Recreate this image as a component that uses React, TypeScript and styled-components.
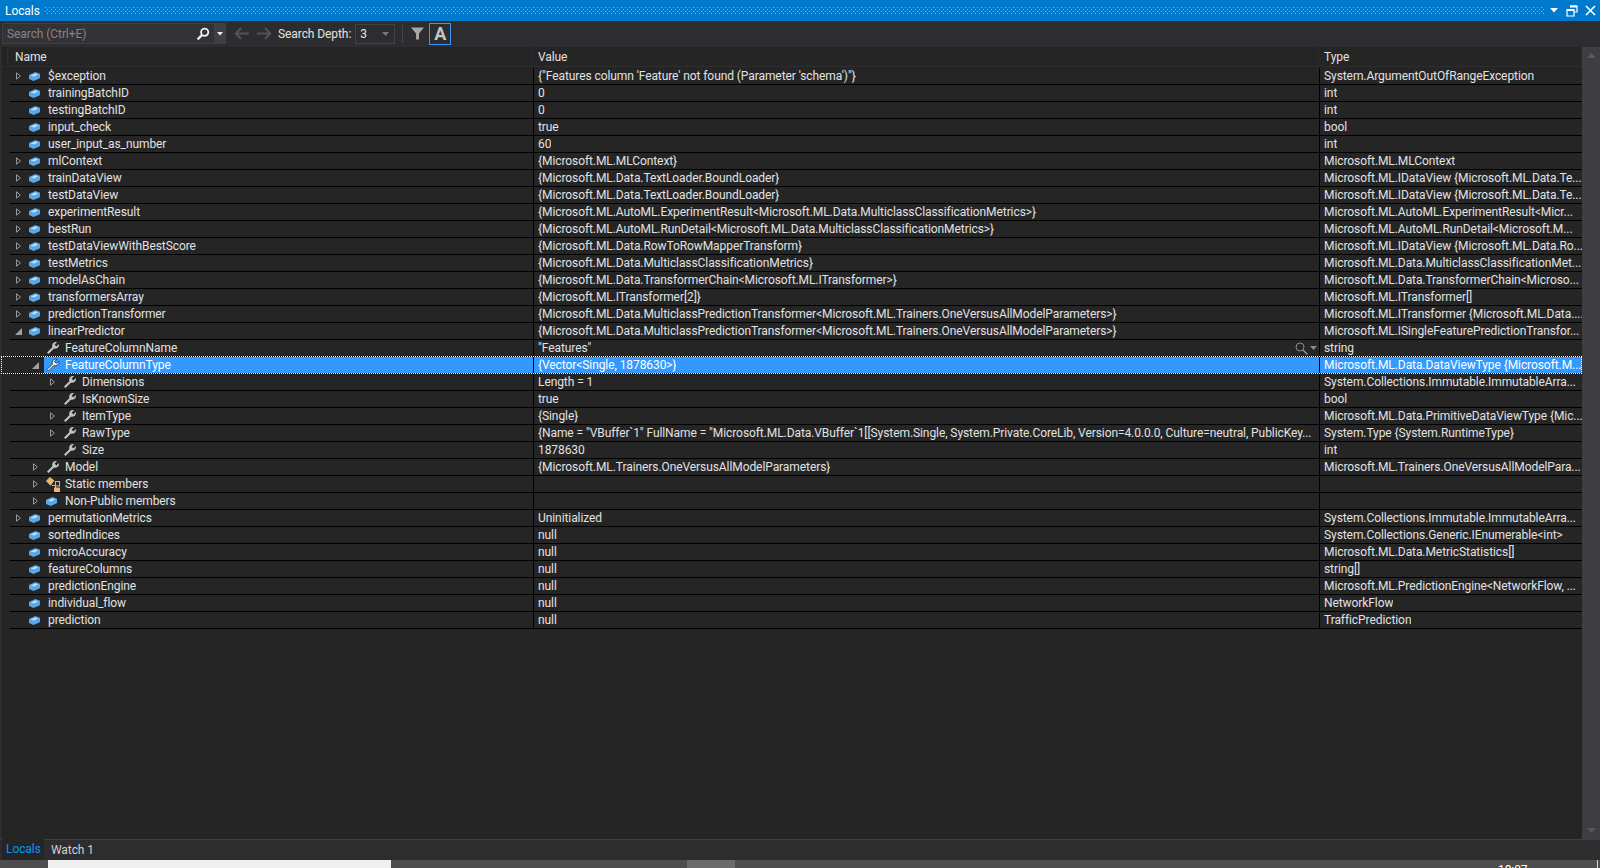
import React from "react";
import styled, { createGlobalStyle } from "styled-components";

type Arrow = "none" | "closed" | "open";
type IconKind = "cube" | "wrench" | "static";

interface Local {
  name: string;
  value: string;
  type: string;
  level?: number;
  arrow?: Arrow;
  icon?: IconKind;
  selected?: boolean;
  visualizer?: boolean;
}

const TRANSFORMER =
  "{Microsoft.ML.Data.MulticlassPredictionTransformer<Microsoft.ML.Trainers.OneVersusAllModelParameters>}";
const LOADER = "{Microsoft.ML.Data.TextLoader.BoundLoader}";

const locals: Local[] = [
  { name: "$exception", value: `{"Features column 'Feature' not found (Parameter 'schema')"}`, type: "System.ArgumentOutOfRangeException", arrow: "closed" },
  { name: "trainingBatchID", value: "0", type: "int" },
  { name: "testingBatchID", value: "0", type: "int" },
  { name: "input_check", value: "true", type: "bool" },
  { name: "user_input_as_number", value: "60", type: "int" },
  { name: "mlContext", value: "{Microsoft.ML.MLContext}", type: "Microsoft.ML.MLContext", arrow: "closed" },
  { name: "trainDataView", value: LOADER, type: "Microsoft.ML.IDataView {Microsoft.ML.Data.Te...", arrow: "closed" },
  { name: "testDataView", value: LOADER, type: "Microsoft.ML.IDataView {Microsoft.ML.Data.Te...", arrow: "closed" },
  { name: "experimentResult", value: "{Microsoft.ML.AutoML.ExperimentResult<Microsoft.ML.Data.MulticlassClassificationMetrics>}", type: "Microsoft.ML.AutoML.ExperimentResult<Micr...", arrow: "closed" },
  { name: "bestRun", value: "{Microsoft.ML.AutoML.RunDetail<Microsoft.ML.Data.MulticlassClassificationMetrics>}", type: "Microsoft.ML.AutoML.RunDetail<Microsoft.M...", arrow: "closed" },
  { name: "testDataViewWithBestScore", value: "{Microsoft.ML.Data.RowToRowMapperTransform}", type: "Microsoft.ML.IDataView {Microsoft.ML.Data.Ro...", arrow: "closed" },
  { name: "testMetrics", value: "{Microsoft.ML.Data.MulticlassClassificationMetrics}", type: "Microsoft.ML.Data.MulticlassClassificationMet...", arrow: "closed" },
  { name: "modelAsChain", value: "{Microsoft.ML.Data.TransformerChain<Microsoft.ML.ITransformer>}", type: "Microsoft.ML.Data.TransformerChain<Microso...", arrow: "closed" },
  { name: "transformersArray", value: "{Microsoft.ML.ITransformer[2]}", type: "Microsoft.ML.ITransformer[]", arrow: "closed" },
  { name: "predictionTransformer", value: TRANSFORMER, type: "Microsoft.ML.ITransformer {Microsoft.ML.Data....", arrow: "closed" },
  { name: "linearPredictor", value: TRANSFORMER, type: "Microsoft.ML.ISingleFeaturePredictionTransfor...", arrow: "open" },
  { name: "FeatureColumnName", value: `"Features"`, type: "string", level: 1, icon: "wrench", visualizer: true },
  { name: "FeatureColumnType", value: "{Vector<Single, 1878630>}", type: "Microsoft.ML.Data.DataViewType {Microsoft.M...", level: 1, arrow: "open", icon: "wrench", selected: true },
  { name: "Dimensions", value: "Length = 1", type: "System.Collections.Immutable.ImmutableArra...", level: 2, arrow: "closed", icon: "wrench" },
  { name: "IsKnownSize", value: "true", type: "bool", level: 2, icon: "wrench" },
  { name: "ItemType", value: "{Single}", type: "Microsoft.ML.Data.PrimitiveDataViewType {Mic...", level: 2, arrow: "closed", icon: "wrench" },
  { name: "RawType", value: `{Name = "VBuffer\`1" FullName = "Microsoft.ML.Data.VBuffer\`1[[System.Single, System.Private.CoreLib, Version=4.0.0.0, Culture=neutral, PublicKey...`, type: "System.Type {System.RuntimeType}", level: 2, arrow: "closed", icon: "wrench" },
  { name: "Size", value: "1878630", type: "int", level: 2, icon: "wrench" },
  { name: "Model", value: "{Microsoft.ML.Trainers.OneVersusAllModelParameters}", type: "Microsoft.ML.Trainers.OneVersusAllModelPara...", level: 1, arrow: "closed", icon: "wrench" },
  { name: "Static members", value: "", type: "", level: 1, arrow: "closed", icon: "static" },
  { name: "Non-Public members", value: "", type: "", level: 1, arrow: "closed" },
  { name: "permutationMetrics", value: "Uninitialized", type: "System.Collections.Immutable.ImmutableArra...", arrow: "closed" },
  { name: "sortedIndices", value: "null", type: "System.Collections.Generic.IEnumerable<int>" },
  { name: "microAccuracy", value: "null", type: "Microsoft.ML.Data.MetricStatistics[]" },
  { name: "featureColumns", value: "null", type: "string[]" },
  { name: "predictionEngine", value: "null", type: "Microsoft.ML.PredictionEngine<NetworkFlow, ..." },
  { name: "individual_flow", value: "null", type: "NetworkFlow" },
  { name: "prediction", value: "null", type: "TrafficPrediction" },
];

const CubeIcon = () => (
  <svg width="11" height="9" viewBox="0 0 11 9">
    <path
      d="M0 3.5Q0 3 .8 2.6L6 .2Q6.6 0 7 .2L10.4 1.6Q11 1.9 11 2.4V5.5Q11 6 10.4 6.4L5 8.8Q4.4 9 4 8.8L.6 7.2Q0 6.9 0 6.4z"
      fill="#57a9ec"
    />
    <path d="M2 3.4 6.2 1.4 9 2.5 5 4.4z" fill="#c4e2fb" />
  </svg>
);

const WrenchIcon = ({ selected }: { selected?: boolean }) => (
  <svg width="14" height="14" viewBox="0 0 14 14">
    <path
      d="M1 11.5 6.3 6.2C5.8 3.6 7 1 10 1L11 1.2 8.6 3.6 10.4 5.4 12.8 3 13 4C13 7 10.4 8.2 7.8 7.7L2.5 13Z"
      fill={selected ? "#e8e8e8" : "#c2c2c2"}
      stroke={selected ? "#2a2a2a" : "none"}
      strokeWidth="0.8"
    />
  </svg>
);

const StaticIcon = () => (
  <svg width="14" height="15" viewBox="0 0 14 15">
    <path d="M6 8.5h3.5V12" stroke="#e8b778" strokeWidth="1" fill="none" />
    <path d="M0 4 3.8 0 8.4 3.4 4.6 8.8z" fill="#e8b778" />
    <rect x="9.5" y="4.5" width="4" height="4.5" fill="#252526" stroke="#e8b778" />
    <rect x="8" y="10.5" width="6" height="4.5" fill="#e8b778" />
  </svg>
);

const ExpandArrow = ({ state }: { state: Arrow }) => {
  if (state === "closed") {
    return (
      <svg width="5" height="8" viewBox="0 0 5 8">
        <path d="M.5.8 4.4 4 .5 7.2z" fill="none" stroke="#9a9a9a" />
      </svg>
    );
  }
  if (state === "open") {
    return (
      <svg width="7" height="7" viewBox="0 0 7 7">
        <path d="M7 0v7H0z" fill="#a0a0a0" />
      </svg>
    );
  }
  return null;
};

const App: React.FC = () => {
  return (
    <>
      <GlobalStyle />
      <Window>
        <TitleBar>
          <TitleText>Locals</TitleText>
          <Dither />
          <TitleButtons>
            <svg width="10" height="5" viewBox="0 0 10 5">
              <path d="M1 0h8L5 4.6z" fill="#fff" />
            </svg>
            <svg width="12" height="12" viewBox="0 0 12 12">
              <path d="M4 1h7v6H8M1 4.5h7v6.5H1z" fill="none" stroke="#fff" strokeWidth="1.2" />
              <path d="M4 1.5h7M1 5h7" stroke="#fff" strokeWidth="2" />
            </svg>
            <svg width="11" height="11" viewBox="0 0 11 11">
              <path d="M1 1l9 9M10 1l-9 9" stroke="#fff" strokeWidth="1.6" />
            </svg>
          </TitleButtons>
        </TitleBar>

        <Toolbar>
          <SearchBox>
            <SearchHint>Search (Ctrl+E)</SearchHint>
            <svg width="14" height="14" viewBox="0 0 14 14">
              <circle cx="8.7" cy="5.2" r="3.6" fill="none" stroke="#f0f0f0" strokeWidth="1.8" />
              <path d="M6 8 1.6 12.4" stroke="#f0f0f0" strokeWidth="2.4" />
            </svg>
            <SearchDrop>
              <svg width="6" height="4" viewBox="0 0 6 4">
                <path d="M0 0h6L3 3.4z" fill="#f0f0f0" />
              </svg>
            </SearchDrop>
          </SearchBox>
          <NavArrows>
            <svg width="16" height="13" viewBox="0 0 16 13">
              <path d="M7 1 1.8 6.5 7 12M2 6.5h13" fill="none" stroke="#555557" strokeWidth="2" />
            </svg>
            <svg width="16" height="13" viewBox="0 0 16 13">
              <path d="M9 1l5.2 5.5L9 12M14 6.5H1" fill="none" stroke="#555557" strokeWidth="2" />
            </svg>
          </NavArrows>
          <DepthLabel>Search Depth:</DepthLabel>
          <DepthCombo>
            <span>3</span>
            <svg width="7" height="4" viewBox="0 0 7 4">
              <path d="M0 0h7L3.5 4z" fill="#77777a" />
            </svg>
          </DepthCombo>
          <ToolSeparator />
          <FilterButton>
            <svg width="13" height="13" viewBox="0 0 13 13">
              <path d="M0 .5h13L8 6.5V12.5H5V6.5z" fill="#a6a6a6" />
            </svg>
          </FilterButton>
          <CaseButton>A</CaseButton>
        </Toolbar>

        <Body>
          <Grid>
            <HeaderRow>
              <HeaderGutter />
              <HeaderCell $width={525} $pad={7}>Name</HeaderCell>
              <HeaderCell $width={786}>Value</HeaderCell>
              <HeaderCell>Type</HeaderCell>
            </HeaderRow>
            <Rows>
              {locals.map((item) => {
                const level = item.level ?? 0;
                return (
                  <Row key={item.name} $selected={item.selected}>
                    <NameCell $level={level}>
                      <ArrowSlot>
                        <ExpandArrow state={item.arrow ?? "none"} />
                      </ArrowSlot>
                      <IconSlot>
                        {item.icon === "wrench" ? (
                          <WrenchIcon selected={item.selected} />
                        ) : item.icon === "static" ? (
                          <StaticIcon />
                        ) : (
                          <CubeIcon />
                        )}
                      </IconSlot>
                      {item.name}
                    </NameCell>
                    <ValueCell>
                      <CellText>{item.value}</CellText>
                      {item.visualizer && (
                        <Visualizer>
                          <svg width="13" height="13" viewBox="0 0 13 13">
                            <circle cx="5" cy="5" r="4" fill="none" stroke="#8a8a8a" />
                            <path d="M8 8 12.4 12.4" stroke="#8a8a8a" strokeWidth="1.6" />
                          </svg>
                          <svg width="7" height="4" viewBox="0 0 7 4">
                            <path d="M0 0h7L3.5 4z" fill="#8a8a8a" />
                          </svg>
                        </Visualizer>
                      )}
                    </ValueCell>
                    <TypeCell>
                      <CellText>{item.type}</CellText>
                    </TypeCell>
                  </Row>
                );
              })}
            </Rows>
          </Grid>
          <ScrollBar>
            <svg width="9" height="5" viewBox="0 0 9 5">
              <path d="M4.5 0 9 5H0z" fill="#5a5a5e" />
            </svg>
            <svg width="9" height="5" viewBox="0 0 9 5">
              <path d="M0 0h9L4.5 5z" fill="#5a5a5e" />
            </svg>
          </ScrollBar>
        </Body>

        <TabBar>
          <ActiveTab>Locals</ActiveTab>
          <Tab>Watch 1</Tab>
        </TabBar>

        <BottomStrip>
          <WhiteBlock />
          <GreyBlock />
          <ClockText>18:07</ClockText>
          <StripTick />
        </BottomStrip>
      </Window>
    </>
  );
};

export default App;

const GlobalStyle = createGlobalStyle`
  html, body {
    margin: 0;
    padding: 0;
    height: 100%;
    background: #252526;
  }
  #root {
    height: 100%;
  }
  * {
    box-sizing: border-box;
  }
`;

const Window = styled.div`
  display: flex;
  flex-direction: column;
  width: 1600px;
  height: 868px;
  overflow: hidden;
  background: #252526;
  color: #e2e2e2;
  font-family: Roboto, "Liberation Sans", sans-serif;
  font-size: 12px;
  letter-spacing: -0.08px;
`;

const TitleBar = styled.div`
  display: flex;
  align-items: center;
  flex: 0 0 21px;
  padding: 0 4px 0 5px;
  background: #007acc;
  color: #fff;
`;

const TitleText = styled.div`
  width: 40px;
`;

const Dither = styled.div`
  flex: 1;
  height: 7px;
  margin-right: 4px;
  background-image:
    radial-gradient(circle at 0.5px 0.5px, #6db7e8 0.7px, transparent 0.7px),
    radial-gradient(circle at 0.5px 0.5px, #6db7e8 0.7px, transparent 0.7px);
  background-position: 0 0, 2px 2px;
  background-size: 4px 4px;
`;

const TitleButtons = styled.div`
  display: flex;
  align-items: center;
  gap: 7px;
`;

const Toolbar = styled.div`
  display: flex;
  align-items: center;
  flex: 0 0 26px;
  padding: 0 0 1px 2px;
  background: #2d2d30;
`;

const SearchBox = styled.div`
  display: flex;
  align-items: center;
  width: 224px;
  height: 21px;
  background: #333337;
  border: 1px solid #3f3f46;
  border-right: none;
  svg {
    flex: none;
  }
`;

const SearchHint = styled.div`
  flex: 1;
  padding-left: 4px;
  color: #858585;
`;

const SearchDrop = styled.div`
  display: flex;
  align-items: center;
  justify-content: center;
  flex: 0 0 12px;
  height: 100%;
  margin-left: 4px;
  background: #3f3f46;
`;

const NavArrows = styled.div`
  display: flex;
  gap: 6px;
  margin-left: 8px;
`;

const DepthLabel = styled.div`
  margin-left: 6px;
  white-space: nowrap;
`;

const DepthCombo = styled.div`
  display: flex;
  align-items: center;
  justify-content: space-between;
  width: 40px;
  height: 20px;
  margin-left: 4px;
  padding: 0 5px 0 4px;
  border: 1px solid #434346;
`;

const ToolSeparator = styled.div`
  width: 1px;
  height: 18px;
  margin-left: 7px;
  background: #46464a;
`;

const FilterButton = styled.div`
  display: flex;
  margin-left: 8px;
`;

const CaseButton = styled.div`
  width: 22px;
  height: 22px;
  margin-left: 5px;
  border: 1px solid #3399ff;
  color: #c4c4c4;
  font-size: 18px;
  font-weight: 700;
  line-height: 20px;
  text-align: center;
`;

const Body = styled.div`
  display: flex;
  flex: 1;
  min-height: 0;
  border-left: 2px solid #2d2d30;
`;

const Grid = styled.div`
  flex: 1;
  min-width: 0;
`;

const HeaderRow = styled.div`
  display: flex;
  height: 20px;
  border-bottom: 1px solid #2d2d30;
`;

const HeaderGutter = styled.div`
  width: 6px;
  background: #222223;
  border-right: 1px solid #2d2d30;
`;

const HeaderCell = styled.div<{ $width?: number; $pad?: number }>`
  flex: ${({ $width }) => ($width ? `0 0 ${$width}px` : "1")};
  padding-left: ${({ $pad }) => $pad ?? 5}px;
  border-right: 1px solid #2d2d30;
  line-height: 21px;
`;

const Rows = styled.div`
  display: flex;
  flex-direction: column;
  padding-top: 1px;
`;

const Row = styled.div<{ $selected?: boolean }>`
  position: relative;
  display: flex;
  flex: 0 0 17px;
  height: 17px;
  margin-left: 8px;
  border-bottom: 1px solid #000;
  line-height: 16px;
  white-space: nowrap;
  color: ${({ $selected }) => ($selected ? "#fff" : "inherit")};
  background: ${({ $selected }) =>
    $selected ? "linear-gradient(to right, transparent 34px, #3399ff 34px)" : "none"};

  ${({ $selected }) =>
    $selected &&
    `&::after {
      content: "";
      position: absolute;
      top: -1px;
      right: 0;
      bottom: -1px;
      left: -9px;
      border: 1px dotted #fff;
      pointer-events: none;
    }`}
`;

const NameCell = styled.div<{ $level: number }>`
  display: flex;
  align-items: center;
  flex: 0 0 524px;
  padding-left: ${({ $level }) => 5 + $level * 17}px;
  border-right: 1px solid #000;
`;

const ArrowSlot = styled.div`
  display: flex;
  align-items: center;
  justify-content: center;
  flex: 0 0 7px;
  margin-right: 7px;
`;

const IconSlot = styled.div`
  display: flex;
  align-items: center;
  flex: 0 0 19px;
`;

const ValueCell = styled.div`
  display: flex;
  align-items: center;
  flex: 0 0 786px;
  min-width: 0;
  padding: 0 2px 0 4px;
  border-right: 1px solid #000;
`;

const TypeCell = styled.div`
  display: flex;
  align-items: center;
  flex: 1;
  min-width: 0;
  padding-left: 4px;
`;

const CellText = styled.span`
  min-width: 0;
  overflow: hidden;
`;

const Visualizer = styled.div`
  display: flex;
  align-items: center;
  gap: 2px;
  margin-left: auto;
`;

const ScrollBar = styled.div`
  display: flex;
  flex-direction: column;
  align-items: center;
  justify-content: space-between;
  flex: 0 0 18px;
  padding: 6px 0;
  background: #3e3e42;
`;

const TabBar = styled.div`
  display: flex;
  flex: 0 0 21px;
  background: #2d2d30;
  border-top: 1px solid #3f3f46;
  line-height: 20px;
`;

const ActiveTab = styled.div`
  width: 42px;
  margin: -1px 0 0 2px;
  padding-left: 4px;
  background: #252526;
  color: #0097fb;
`;

const Tab = styled.div`
  padding-left: 7px;
  color: #d0d0d0;
`;

const BottomStrip = styled.div`
  display: flex;
  flex: 0 0 8px;
  overflow: hidden;
  background: #4d4d4d;
`;

const WhiteBlock = styled.div`
  flex: 0 0 343px;
  margin-left: 48px;
  background: #f0f0f0;
`;

const GreyBlock = styled.div`
  flex: 0 0 48px;
  margin-left: 296px;
  background: #6b6b6b;
`;

const ClockText = styled.div`
  margin-left: 763px;
  padding-top: 3px;
  color: #fff;
  line-height: 14px;
`;

const StripTick = styled.div`
  width: 1px;
  margin-left: 70px;
  background: #d8d8d8;
`;
